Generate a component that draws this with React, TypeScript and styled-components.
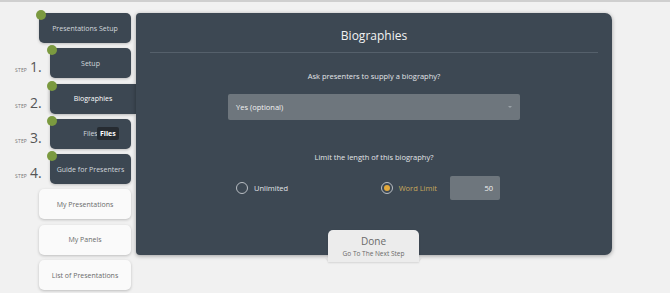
import React from 'react';
import styled, { createGlobalStyle } from 'styled-components';

const GlobalStyle = createGlobalStyle`
  html, body {
    margin: 0;
    padding: 0;
    background: #f1f1f1;
    font-family: "Open Sans", "Noto Sans", sans-serif;
  }
`;

const Page = styled.div`
  width: 670px;
  height: 293px;
  box-sizing: border-box;
  border-top: 2px solid #cfcfcf;
  display: flex;
  align-items: flex-start;
  padding-top: 11px;
  overflow: hidden;
`;

const Nav = styled.div`
  width: 136px;
  display: flex;
  flex-direction: column;
  gap: 5.3px;
`;

const NavRow = styled.div<{ $inset: number }>`
  display: flex;
  align-items: center;
  height: 30px;
  padding-left: ${(p) => p.$inset}px;
  position: relative;
`;

const StepLabel = styled.div`
  position: absolute;
  left: 15px;
  top: 9px;
  display: flex;
  align-items: baseline;
  gap: 3px;
  color: #555;
`;

const StepWord = styled.span`
  font-size: 5px;
  letter-spacing: 0.2px;
  color: #777;
`;

const StepNum = styled.span`
  font-size: 14px;
  color: #555;
`;

const NavButton = styled.div<{ $dark?: boolean; $active?: boolean }>`
  position: relative;
  flex: 1;
  height: 30px;
  margin-right: ${(p) => (p.$active ? 0 : 5)}px;
  display: flex;
  align-items: center;
  justify-content: center;
  font-size: 7px;
  border-radius: ${(p) => (p.$active ? '5px 0 0 5px' : '5px')};
  background: ${(p) => (p.$dark ? '#3c4752' : '#fafafa')};
  box-shadow: ${(p) =>
    p.$active ? '-1px 1px 3px rgba(0,0,0,0.25)' : '0 1px 3px rgba(0,0,0,0.22)'};
  color: ${(p) => (p.$active ? '#ffffff' : p.$dark ? '#d3d8dd' : '#6a6a6a')};
`;

const Dot = styled.span`
  position: absolute;
  left: -3px;
  top: -3px;
  width: 10px;
  height: 10px;
  border-radius: 50%;
  background: #7b9a40;
`;

const Tooltip = styled.span`
  position: absolute;
  left: 47px;
  top: 8px;
  padding: 2px 3px;
  border-radius: 2px;
  background: #262b31;
  color: #fff;
  font-size: 7px;
  font-weight: 700;
`;

const Panel = styled.div`
  position: relative;
  width: 476px;
  height: 242px;
  box-sizing: border-box;
  background: #3d4853;
  border-radius: 4px 7px 7px 4px;
  box-shadow: 0 1px 4px rgba(0, 0, 0, 0.35);
  padding: 0 14px;
  display: flex;
  flex-direction: column;
  align-items: center;
`;

const Title = styled.h1`
  margin: 0;
  padding: 14px 0 0;
  height: 25px;
  font-size: 12px;
  font-weight: 400;
  color: #f2f2f2;
`;

const Divider = styled.div`
  align-self: stretch;
  height: 1px;
  background: #55606b;
`;

const Question = styled.p<{ $gap: number }>`
  margin: ${(p) => p.$gap}px 0 0;
  font-size: 7.5px;
  color: #e2e5e8;
`;

const Select = styled.div`
  width: 292px;
  height: 26px;
  box-sizing: border-box;
  margin-top: 13px;
  padding: 0 8px;
  border-radius: 2px;
  background: #6e767d;
  color: #f2f2f2;
  font-size: 7.5px;
  display: flex;
  align-items: center;
  justify-content: space-between;
`;

const Caret = styled.span`
  width: 0;
  height: 0;
  border-left: 2px solid transparent;
  border-right: 2px solid transparent;
  border-top: 2px solid #9aa1a7;
`;

const Choices = styled.div`
  width: 264px;
  margin: 14px 12px 0 0;
  display: flex;
  align-items: center;
  justify-content: space-between;
`;

const Option = styled.label<{ $on?: boolean }>`
  display: flex;
  align-items: center;
  gap: 6px;
  font-size: 7.5px;
  color: ${(p) => (p.$on ? '#c8a85c' : '#e2e5e8')};
`;

const Radio = styled.span<{ $on?: boolean }>`
  width: 12px;
  height: 12px;
  box-sizing: border-box;
  border-radius: 50%;
  border: 1px solid #b9bec3;
  display: flex;
  align-items: center;
  justify-content: center;
  &::after {
    content: '';
    width: 6px;
    height: 6px;
    border-radius: 50%;
    background: ${(p) => (p.$on ? '#e3a93b' : 'transparent')};
  }
`;

const LimitGroup = styled.div`
  display: flex;
  align-items: center;
  gap: 13px;
`;

const NumberBox = styled.div`
  width: 50px;
  height: 24px;
  box-sizing: border-box;
  padding-right: 7px;
  border-radius: 2px;
  background: #6e767d;
  color: #f2f2f2;
  font-size: 7.5px;
  display: flex;
  align-items: center;
  justify-content: flex-end;
`;

const DoneTab = styled.div`
  position: absolute;
  left: 192px;
  bottom: -7px;
  width: 91px;
  height: 32px;
  border-radius: 5px 5px 0 0;
  background: #ececec;
  box-shadow: 0 1px 2px rgba(0, 0, 0, 0.12);
  display: flex;
  flex-direction: column;
  align-items: center;
  justify-content: center;
  gap: 1px;
  &::before,
  &::after {
    content: '';
    position: absolute;
    bottom: 0;
    width: 0;
    height: 0;
    border-top: 4px solid #dedede;
  }
  &::before {
    left: -3px;
    border-left: 3px solid transparent;
  }
  &::after {
    right: -3px;
    border-right: 3px solid transparent;
  }
`;

const DoneLabel = styled.span`
  font-size: 10px;
  color: #6a6a6a;
`;

const DoneSub = styled.span`
  font-size: 6.5px;
  color: #6a6a6a;
`;

type Item = { label: string; step?: number; dark?: boolean; active?: boolean; tip?: string };

const items: Item[] = [
  { label: 'Presentations Setup', dark: true },
  { label: 'Setup', step: 1, dark: true },
  { label: 'Biographies', step: 2, dark: true, active: true },
  { label: 'Files', step: 3, dark: true, tip: 'Files' },
  { label: 'Guide for Presenters', step: 4, dark: true },
  { label: 'My Presentations' },
  { label: 'My Panels' },
  { label: 'List of Presentations' },
];

export default function App() {
  return (
    <>
      <GlobalStyle />
      <Page>
        <Nav>
          {items.map((it) => (
            <NavRow key={it.label} $inset={it.step ? 50 : 39}>
              {it.step && (
                <StepLabel>
                  <StepWord>STEP</StepWord>
                  <StepNum>{it.step}.</StepNum>
                </StepLabel>
              )}
              <NavButton $dark={it.dark} $active={it.active}>
                {it.dark && <Dot />}
                {it.label}
                {it.tip && <Tooltip>{it.tip}</Tooltip>}
              </NavButton>
            </NavRow>
          ))}
        </Nav>
        <Panel>
          <Title>Biographies</Title>
          <Divider />
          <Question $gap={18}>Ask presenters to supply a biography?</Question>
          <Select>
            Yes (optional)
            <Caret />
          </Select>
          <Question $gap={32}>Limit the length of this biography?</Question>
          <Choices>
            <Option>
              <Radio />
              Unlimited
            </Option>
            <LimitGroup>
              <Option $on>
                <Radio $on />
                Word Limit
              </Option>
              <NumberBox>50</NumberBox>
            </LimitGroup>
          </Choices>
          <DoneTab>
            <DoneLabel>Done</DoneLabel>
            <DoneSub>Go To The Next Step</DoneSub>
          </DoneTab>
        </Panel>
      </Page>
    </>
  );
}
